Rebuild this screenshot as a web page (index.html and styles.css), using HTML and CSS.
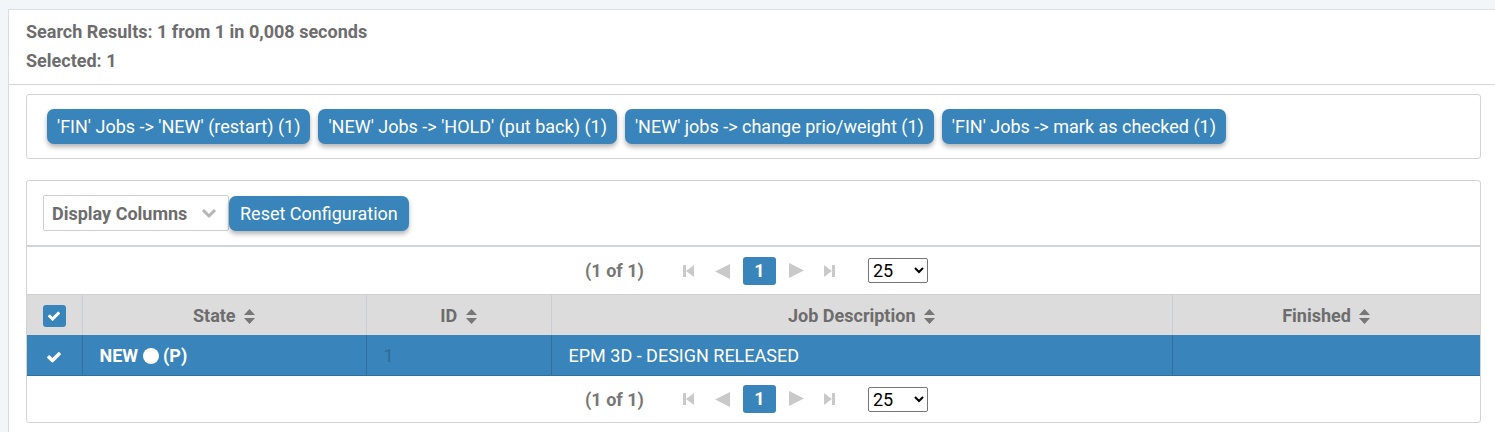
FILE: index.html
```html
<!DOCTYPE html>
<html lang="en">
<head>
  <meta charset="UTF-8">
  <title>Job Search</title>
  <link rel="stylesheet" href="styles.css">
</head>
<body>
  <div class="page">
    <div class="results-head">
      <p>Search Results: 1 from 1 in 0,008 seconds</p>
      <p>Selected: 1</p>
    </div>

    <div class="content">
      <!-- Bulk actions -->
      <div class="action-panel">
        <button class="btn">'FIN' Jobs -&gt; 'NEW' (restart) (1)</button>
        <button class="btn">'NEW' Jobs -&gt; 'HOLD' (put back) (1)</button>
        <button class="btn">'NEW' jobs -&gt; change prio/weight (1)</button>
        <button class="btn">'FIN' Jobs -&gt; mark as checked (1)</button>
      </div>

      <!-- Results table -->
      <div class="table-panel">
        <div class="toolbar">
          <div class="col-select">
            <span>Display Columns</span>
            <svg width="16" height="12" viewBox="0 0 16 12"><path d="M2 3l6 6 6-6" fill="none" stroke="#b5b5b5" stroke-width="3"/></svg>
          </div>
          <button class="btn">Reset Configuration</button>
        </div>

        <div class="paginator">
          <span class="page-info">(1 of 1)</span>
          <span class="pg-icon"><svg width="12" height="14" viewBox="0 0 12 14"><rect x="0" y="1" width="3" height="12" fill="#c9c9c9"/><path d="M11 1v12L3 7z" fill="#c9c9c9"/></svg></span>
          <span class="pg-icon"><svg width="15" height="16" viewBox="0 0 15 16"><path d="M15 1v15L0 8.5z" fill="#c9c9c9"/></svg></span>
          <span class="pg-num">1</span>
          <span class="pg-icon"><svg width="15" height="16" viewBox="0 0 15 16"><path d="M0 0v15l15-7.5z" fill="#c9c9c9"/></svg></span>
          <span class="pg-icon"><svg width="12" height="14" viewBox="0 0 12 14"><path d="M1 1v12l8-6z" fill="#c9c9c9"/><rect x="9" y="1" width="3" height="12" fill="#c9c9c9"/></svg></span>
          <select class="rows-select"><option>25</option></select>
        </div>

        <table class="grid">
          <colgroup>
            <col class="c-check"><col class="c-state"><col class="c-id"><col class="c-desc"><col>
          </colgroup>
          <thead>
            <tr>
              <th><span class="box"><svg width="14" height="14" viewBox="0 0 1792 1792"><path d="M1671 566q0 40-28 68l-724 724-136 136q-28 28-68 28t-68-28l-136-136-362-362q-28-28-28-68t28-68l136-136q28-28 68-28t68 28l294 295 656-657q28-28 68-28t68 28l136 136q28 28 28 68z" fill="#fff"/></svg></span></th>
              <th>State <svg class="sort" width="11" height="15" viewBox="0 0 11 15"><path d="M5.5 0L11 6H0z M0 9h11l-5.5 6z" fill="#777"/></svg></th>
              <th>ID <svg class="sort" width="11" height="15" viewBox="0 0 11 15"><path d="M5.5 0L11 6H0z M0 9h11l-5.5 6z" fill="#777"/></svg></th>
              <th>Job Description <svg class="sort" width="11" height="15" viewBox="0 0 11 15"><path d="M5.5 0L11 6H0z M0 9h11l-5.5 6z" fill="#777"/></svg></th>
              <th>Finished <svg class="sort" width="11" height="15" viewBox="0 0 11 15"><path d="M5.5 0L11 6H0z M0 9h11l-5.5 6z" fill="#777"/></svg></th>
            </tr>
          </thead>
          <tbody>
            <tr class="selected">
              <td class="center"><svg width="16" height="16" viewBox="0 0 1792 1792"><path d="M1671 566q0 40-28 68l-724 724-136 136q-28 28-68 28t-68-28l-136-136-362-362q-28-28-28-68t28-68l136-136q28-28 68-28t68 28l294 295 656-657q28-28 68-28t68 28l136 136q28 28 28 68z" fill="#fff"/></svg></td>
              <td class="state">NEW <span class="dot"></span> (P)</td>
              <td class="id">1</td>
              <td>EPM 3D - DESIGN RELEASED</td>
              <td></td>
            </tr>
          </tbody>
        </table>

        <div class="paginator bottom">
          <span class="page-info">(1 of 1)</span>
          <span class="pg-icon"><svg width="12" height="14" viewBox="0 0 12 14"><rect x="0" y="1" width="3" height="12" fill="#c9c9c9"/><path d="M11 1v12L3 7z" fill="#c9c9c9"/></svg></span>
          <span class="pg-icon"><svg width="15" height="16" viewBox="0 0 15 16"><path d="M15 1v15L0 8.5z" fill="#c9c9c9"/></svg></span>
          <span class="pg-num">1</span>
          <span class="pg-icon"><svg width="15" height="16" viewBox="0 0 15 16"><path d="M0 0v15l15-7.5z" fill="#c9c9c9"/></svg></span>
          <span class="pg-icon"><svg width="12" height="14" viewBox="0 0 12 14"><path d="M1 1v12l8-6z" fill="#c9c9c9"/><rect x="9" y="1" width="3" height="12" fill="#c9c9c9"/></svg></span>
          <select class="rows-select"><option>25</option></select>
        </div>
      </div>
    </div>
  </div>
</body>
</html>
```

FILE: styles.css
```css
body {
  margin: 0;
  background-color: #f2f6f9;
  font-family: Roboto, 'Liberation Sans', sans-serif;
  font-size: 18px;
  color: #333;
}

.page {
  margin: 9px 0 0 8px;
  background: #fff;
  border-top: 1px solid #d9dee2;
  border-left: 1px solid #d9dee2;
  height: 430px;
}

/* Search header */
.results-head {
  padding: 7px 17px 9px;
  border-bottom: 1px solid #d2d6d9;
}

.results-head p {
  margin: 0;
  line-height: 29px;
  font-size: 18px;
  font-weight: bold;
  color: #6d6d6d;
}

.content {
  padding: 9px 14px 0 17px;
}

/* Action buttons */
.action-panel {
  display: flex;
  gap: 8px;
  padding: 14px 20px;
  border: 1px solid #d3d3d3;
  border-radius: 3px;
}

.btn {
  height: 35px;
  padding: 0 10px;
  background-color: #3984ba;
  color: #fff;
  border: none;
  border-radius: 7px;
  font-family: Roboto, 'Liberation Sans', sans-serif;
  font-size: 18px;
  box-shadow: 0 3px 5px rgba(0, 0, 0, 0.3);
  cursor: pointer;
}

/* Table panel */
.table-panel {
  margin-top: 21px;
  border: 1px solid #d3d3d3;
  border-radius: 3px;
}

.toolbar {
  display: flex;
  align-items: center;
  padding: 14px 16px 14px;
  border-bottom: 2px solid #d0d4d8;
}

.toolbar .btn {
  padding: 0 11px;
}

.col-select {
  display: flex;
  align-items: center;
  justify-content: space-between;
  box-sizing: border-box;
  width: 186px;
  height: 36px;
  padding: 0 11px 0 8px;
  border: 1px solid #cfcfcf;
  border-radius: 2px;
  font-weight: bold;
  color: #6d6d6d;
}

.paginator {
  display: flex;
  align-items: center;
  justify-content: center;
  height: 47px;
  padding-left: 6px;
}

.paginator.bottom {
  height: 46px;
}

.page-info {
  font-weight: bold;
  color: #777;
  margin-right: 29px;
}

.pg-icon {
  display: flex;
  align-items: center;
  justify-content: center;
  width: 33px;
}

.pg-num {
  width: 33px;
  height: 28px;
  margin: 0 4px;
  line-height: 28px;
  text-align: center;
  background-color: #3984ba;
  color: #fff;
  font-weight: bold;
  border-radius: 3px;
}

.rows-select {
  width: 60px;
  height: 25px;
  margin-left: 22px;
  font-family: Roboto, 'Liberation Sans', sans-serif;
  font-size: 18px;
  color: #000;
  background: #fff;
  border: 1px solid #767676;
  border-radius: 2px;
}

/* Grid */
.grid {
  width: 100%;
  border-collapse: collapse;
  table-layout: fixed;
}

.c-check { width: 55px; }
.c-state { width: 284px; }
.c-id { width: 185px; }
.c-desc { width: 621px; }

.grid th {
  height: 40px;
  padding: 0;
  background-color: #dcdcdc;
  color: #6d6d6d;
  font-weight: bold;
  text-align: center;
  border-left: 1px solid #c9cfd4;
  border-top: 1px solid #d0d0d0;
}

.grid th:first-child,
.grid td:first-child {
  border-left: none;
}

.sort {
  vertical-align: -2px;
  margin-left: 4px;
}

.box {
  display: inline-flex;
  align-items: center;
  justify-content: center;
  width: 23px;
  height: 22px;
  background-color: #3984ba;
  border-radius: 3px;
  vertical-align: middle;
}

.grid td {
  height: 40px;
  padding: 0 17px;
  color: #fff;
  border-left: 1px solid #336f9c;
}

.selected td {
  background-color: #3984ba;
  border-bottom: 1px solid #336f9c;
}

.grid td.center {
  padding: 0;
  text-align: center;
}

.grid td.center svg {
  vertical-align: middle;
}

.state {
  font-weight: bold;
}

.dot {
  display: inline-block;
  width: 16px;
  height: 16px;
  background: #fff;
  border-radius: 50%;
  vertical-align: -2px;
}

.grid td.id {
  color: #2f6c98;
}
```
